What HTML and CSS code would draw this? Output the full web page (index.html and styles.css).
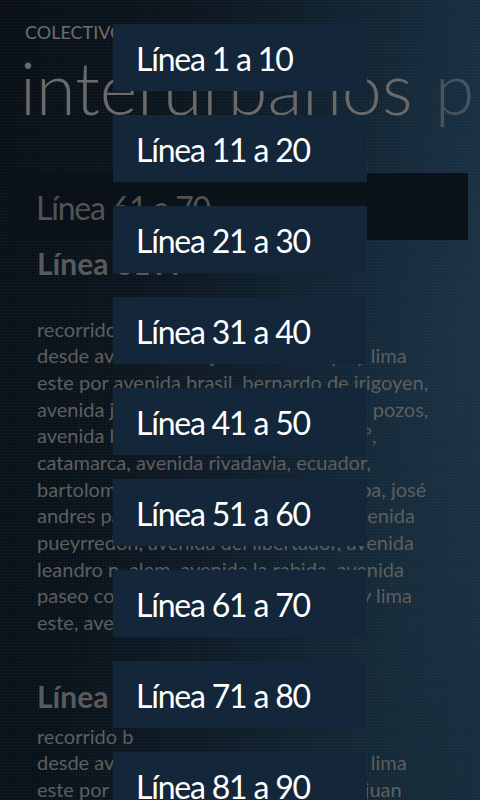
FILE: index.html
```html
<!DOCTYPE html>
<html lang="es">
<head>
<meta charset="utf-8">
<title>Colectivos interurbanos</title>
<link rel="stylesheet" href="styles.css">
</head>
<body>
<div class="screen">
  <header class="app-header">
    <div class="app-title">COLECTIVOS BUENOS AIRES</div>
    <div class="pivot-row">
      <div class="pivot-title">interurbanos</div>
      <div class="pivot-title pivot-next">provinciales</div>
    </div>
  </header>

  <div class="selector">Línea 61 a 70</div>

  <section class="route route-first">
    <h2 class="route-name">Línea 61 A</h2>
    <p class="route-text">recorrido a<br>desde avenida 9 de julio entre mayo y lima<br>este por avenida brasil, bernardo de irigoyen,<br>avenida juan de garay, combate de los pozos,<br>avenida belgrano, avenida de mayo, 1º,<br>catamarca, avenida rivadavia, ecuador,<br>bartolomé mitre, perú, avenida córdoba, josé<br>andres pacheco de melo, av. callao, avenida<br>pueyrredon, avenida del libertador, avenida<br>leandro n. alem, avenida la rabida, avenida<br>paseo colón, hasta avenida 9 de julio y lima<br>este, avenida 9 de julio.</p>
  </section>

  <section class="route route-next">
    <h2 class="route-name">Línea 61 B</h2>
    <p class="route-text">recorrido b<br>desde avenida 9 de julio entre mayo y lima<br>este por avenida brasil, perú, avenida juan</p>
  </section>

  <nav class="picker">
    <div class="pick">Línea 1 a 10</div>
    <div class="pick">Línea 11 a 20</div>
    <div class="pick">Línea 21 a 30</div>
    <div class="pick">Línea 31 a 40</div>
    <div class="pick">Línea 41 a 50</div>
    <div class="pick">Línea 51 a 60</div>
    <div class="pick">Línea 61 a 70</div>
    <div class="pick">Línea 71 a 80</div>
    <div class="pick">Línea 81 a 90</div>
  </nav>
</div>
</body>
</html>
```

FILE: styles.css
```css
html, body {
  margin: 0;
  padding: 0;
}

body {
  width: 480px;
  height: 800px;
  overflow: hidden;
  background: #0a1117;
  font-family: Lato, "Open Sans", sans-serif;
}

.screen {
  position: relative;
  width: 480px;
  height: 800px;
  overflow: hidden;
  background-color: #0c151d;
  background-image:
    radial-gradient(rgba(120, 170, 200, 0.07) 0.8px, transparent 1.2px),
    linear-gradient(180deg, rgba(0, 0, 0, 0) 40%, rgba(4, 8, 12, 0.25) 100%),
    linear-gradient(100deg, #080e14 0%, #0b141c 30%, #122332 60%, #1a3244 85%, #1d374a 100%);
  background-size: 3px 3px, 100% 100%, 100% 100%;
}

.app-header {
  padding-top: 20px;
}

.app-title {
  padding-left: 25px;
  font-size: 18px;
  line-height: 24px;
  color: #6e6e6e;
  white-space: nowrap;
}

.pivot-row {
  margin-top: 3px;
  padding-left: 20px;
  display: flex;
  gap: 22px;
  overflow: hidden;
}

.pivot-title {
  flex: none;
  font-size: 72px;
  font-weight: 300;
  line-height: 80px;
  color: #6a6a6a;
  white-space: nowrap;
}

.pivot-next {
  color: #48545d;
}

.selector {
  margin: 46px 12px 0 10px;
  height: 67px;
  padding: 2px 0 0 26px;
  box-sizing: border-box;
  background: #0a1119;
  font-size: 32px;
  letter-spacing: -1.2px;
  line-height: 65px;
  color: #525252;
}

.route {
  padding-left: 37px;
}

.route-name {
  margin: 5px 0 0;
  font-size: 30px;
  font-weight: 700;
  line-height: 36px;
  color: #5a5a5a;
}

.route-text {
  margin: 0;
  font-size: 20px;
  line-height: 26.67px;
  color: #5e5e5e;
  white-space: nowrap;
}

.route-first .route-text {
  margin-top: 34.6px;
}

.route-next .route-name {
  margin-top: 42.4px;
}

.route-next .route-text {
  margin-top: 8.6px;
}

.picker {
  position: absolute;
  top: 24px;
  left: 113px;
  width: 254px;
  display: flex;
  flex-direction: column;
  gap: 24px;
}

.pick {
  height: 67px;
  flex: none;
  box-sizing: border-box;
  padding: 2px 0 0 23px;
  background: #13263a;
  color: #ffffff;
  font-size: 32px;
  letter-spacing: -1.2px;
  line-height: 65px;
  white-space: nowrap;
}
```
